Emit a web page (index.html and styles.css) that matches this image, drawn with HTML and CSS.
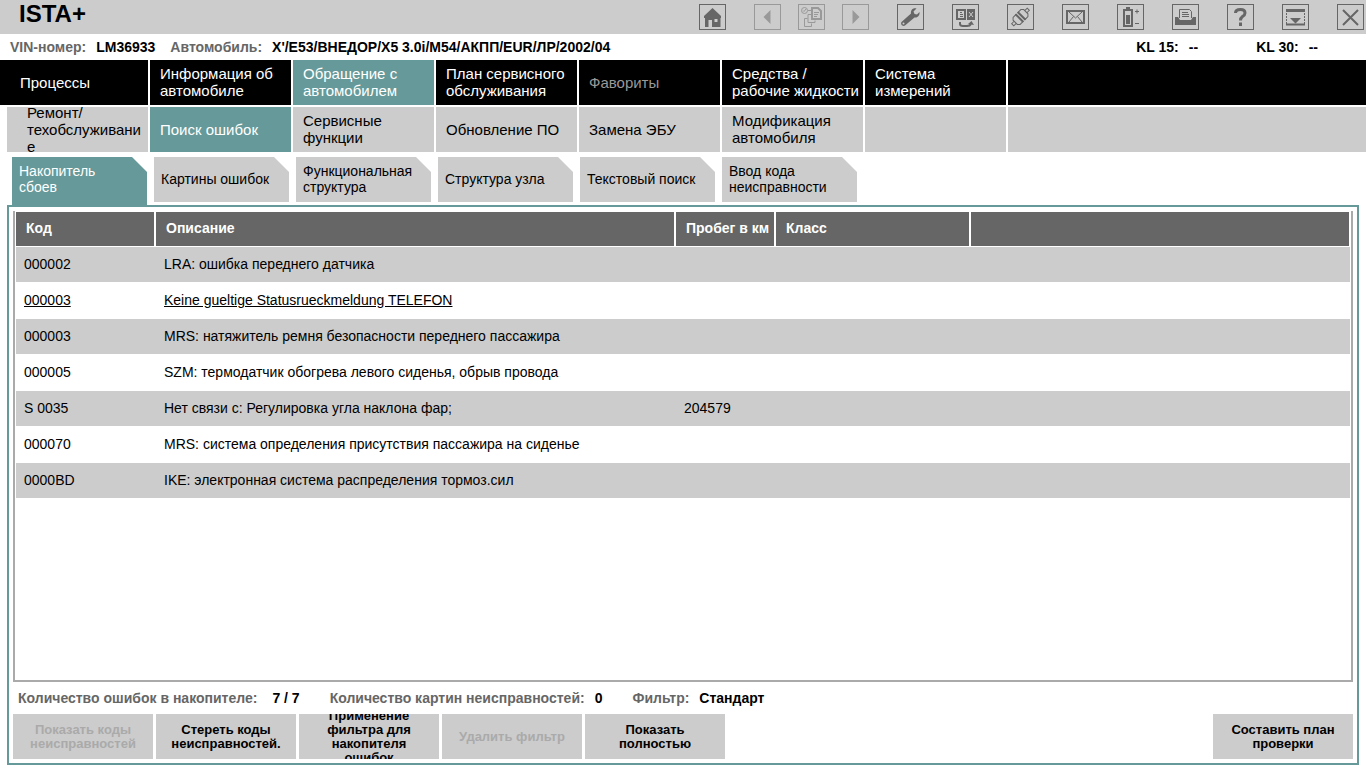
FILE: index.html
```html
<!DOCTYPE html>
<html lang="ru">
<head>
<meta charset="utf-8">
<title>ISTA+</title>
<link rel="stylesheet" href="styles.css">
</head>
<body>
<header class="topbar">
  <h1 class="brand">ISTA+</h1>
  <div class="tools">
    <button class="tool" aria-label="Домой"><svg viewBox="0 0 27 26"><path class="f" d="M13.500 4 22 12v2h-.500v9H18v0h-5v-7H9.500v7H6v-9H5v-2z"/><path class="bg" d="M15.500 15h3v3h-3z"/></svg></button>
    <div class="tool-group">
      <button class="tool" disabled aria-label="Назад"><svg viewBox="0 0 27 26"><path class="f" d="M16.500 6v14L9.500 13z"/></svg></button>
      <button class="tool" disabled aria-label="Список"><svg viewBox="0 0 27 26"><circle class="s" cx="6.500" cy="6.500" r="3"/><path class="s" d="m5 6.500 1 1 2-2.500M10 6.500h3M9.500 14.500h-3v8h7v-3M13 10.500h-3v8h7v-2"/><path class="s w" d="M14 4h6l3 3v8h-9z"/><path class="s" d="M16 8.500h5M16 10.500h4M16 12.500h3"/></svg></button>
      <button class="tool" disabled aria-label="Вперёд"><svg viewBox="0 0 27 26"><path class="f" d="M10.500 6v14l7-7z"/></svg></button>
    </div>
    <button class="tool" aria-label="Настройки"><svg viewBox="0 0 27 26"><path class="f" fill-rule="evenodd" d="M19.500 4.500 16.500 7.500 17.500 10l2.500.500L22.500 8c.500 3-1.500 6-5 5.500L8 21.500c-2 1.500-5-1-3.500-3.500L14 9.500c-.500-3.500 2-6 5.500-5zM5.500 19.500a1 1 0 1 0 2 0 1 1 0 1 0-2 0z"/></svg></button>
    <button class="tool" aria-label="Замена"><svg viewBox="0 0 27 26"><path class="s w" d="M5 6h8v9H5z"/><path class="s" d="M8 8.500h2M8 10.500h3M8 12.500h3"/><path class="f" d="M15 5h8v11h-8z"/><path class="cut" d="m17 8 4 5m0-5-4 5"/><path class="s w" d="M8 18v2q0 2 3 2h4q3 0 4-2"/><path class="f" d="m16 20 3.500-3 2.500 4z"/></svg></button>
    <button class="tool" aria-label="Подключение"><svg viewBox="0 0 27 26"><g transform="rotate(45 13.500 13)"><path class="s" d="M8.500 7.500l2-2h6l2 2v4h-10zM8.500 14.500h10v4l-2 2h-6l-2-2zM12 5.500V2h3v3.500M12 20.500V24h3v-3.500"/><path class="s w" d="M8 11.500h11M8 14.500h11"/></g></svg></button>
    <button class="tool" aria-label="Сообщения"><svg viewBox="0 0 27 26"><path class="s w" d="M5 7h17v12H5z"/><path class="s" d="m7 8 6.500 6L20 8M7 18l4.500-5.500M20 18l-4.500-5.500"/></svg></button>
    <button class="tool" aria-label="Аккумулятор"><svg viewBox="0 0 27 26"><path class="s w" d="M7 6h8v16H7zM10 6V4h2v2"/><path class="f" d="M9 11h4v9H9z"/><path class="s" d="M18 7.500h4M20 5.500v4M18 19.500h4"/></svg></button>
    <button class="tool" aria-label="Печать"><svg viewBox="0 0 27 26"><path class="f" d="M3 13h3l2 3h11l2-3h3v8H3z"/><path class="s" d="M7.500 14V5.500h10l2 2V14"/><path class="s" d="M10 8.500h6M10 10.500h7M10 12.500h7"/></svg></button>
    <button class="tool" aria-label="Справка"><svg viewBox="0 0 27 26"><path class="s ww" d="M8.500 9q0-3.500 5-3.500 4.500 0 4.500 3.500 0 2-2.500 3.500-2 1.500-2 4"/><path class="f" d="M12 18.500h3V22h-3z"/></svg></button>
    <button class="tool" aria-label="Свернуть"><svg viewBox="0 0 27 26"><path class="f" d="M4 5h19v3H4zM8 14h11l-5.500 5.500z"/><path class="s dash" d="M4.500 9v11M22.500 9v11"/><path class="s w" d="M4 20.500h19"/></svg></button>
    <button class="tool" aria-label="Закрыть"><svg viewBox="0 0 27 26"><path class="s w" d="m6 6 15 15M21 6 6 21"/></svg></button>
  </div>
</header>

<section class="vehicle">
  <span class="label">VIN-номер:</span><span>LM36933</span>
  <span class="label next">Автомобиль:</span><span>X'/E53/ВНЕДОР/X5 3.0i/M54/АКПП/EUR/ЛР/2002/04</span>
  <span class="clamps"><span>KL 15:</span><span>--</span></span>
  <span class="clamps second"><span>KL 30:</span><span>--</span></span>
</section>

<nav class="nav main">
  <button>Процессы</button>
  <button>Информация об автомобиле</button>
  <button class="active">Обращение с автомобилем</button>
  <button>План сервисного обслуживания</button>
  <button disabled>Фавориты</button>
  <button>Средства / рабочие жидкости</button>
  <button>Система измерений</button>
  <span class="rest"></span>
</nav>
<nav class="nav sub">
  <button>Ремонт/ техобслуживание</button>
  <button class="active">Поиск ошибок</button>
  <button>Сервисные функции</button>
  <button>Обновление ПО</button>
  <button>Замена ЭБУ</button>
  <button>Модификация автомобиля</button>
  <span class="rest"></span>
  <span class="rest"></span>
</nav>
<nav class="tabs">
  <button class="active">Накопитель сбоев</button>
  <button>Картины ошибок</button>
  <button>Функциональная структура</button>
  <button>Структура узла</button>
  <button>Текстовый поиск</button>
  <button>Ввод кода неисправности</button>
</nav>

<main class="panel">
  <div class="list">
    <table class="faults">
      <colgroup><col class="c-code"><col class="c-text"><col class="c-km"><col class="c-class"><col></colgroup>
      <thead><tr><th>Код</th><th>Описание</th><th>Пробег в км</th><th>Класс</th><th></th></tr></thead>
      <tbody>
        <tr><td>000002</td><td>LRA: ошибка переднего датчика</td><td></td><td></td><td></td></tr>
        <tr class="marked"><td>000003</td><td>Keine gueltige Statusrueckmeldung TELEFON</td><td></td><td></td><td></td></tr>
        <tr><td>000003</td><td>MRS: натяжитель ремня безопасности переднего пассажира</td><td></td><td></td><td></td></tr>
        <tr><td>000005</td><td>SZM: термодатчик обогрева левого сиденья, обрыв провода</td><td></td><td></td><td></td></tr>
        <tr><td>S 0035</td><td>Нет связи с: Регулировка угла наклона фар;</td><td>204579</td><td></td><td></td></tr>
        <tr><td>000070</td><td>MRS: система определения присутствия пассажира на сиденье</td><td></td><td></td><td></td></tr>
        <tr><td>0000BD</td><td>IKE: электронная система распределения тормоз.сил</td><td></td><td></td><td></td></tr>
      </tbody>
    </table>
  </div>
  <div class="summary">
    <span class="label">Количество ошибок в накопителе:</span><span class="value wide">7 / 7</span>
    <span class="label">Количество картин неисправностей:</span><span class="value">0</span>
    <span class="label">Фильтр:</span><span class="value">Стандарт</span>
  </div>
  <div class="actions">
    <button disabled>Показать коды неисправностей</button>
    <button>Стереть коды неисправностей.</button>
    <button>Применение фильтра для накопителя ошибок</button>
    <button disabled>Удалить фильтр</button>
    <button>Показать полностью</button>
    <button class="last">Составить план проверки</button>
  </div>
</main>
</body>
</html>
```
FILE: styles.css
```css
* { box-sizing: border-box; }
body {
  margin: 0;
  min-height: 100vh;
  display: flex;
  flex-direction: column;
  background: #fff;
  color: #000;
  font: 14px/16px "Liberation Sans", Arial, sans-serif;
}
button {
  margin: 0;
  padding: 0;
  border: 0;
  border-radius: 0;
  color: inherit;
  font: inherit;
}

.topbar {
  display: flex;
  justify-content: space-between;
  height: 34px;
  padding: 4px 2px 4px 19px;
  background: #ccc;
}
.brand { margin: 0; font-size: 24px; line-height: 20px; }
.tools { display: flex; gap: 28px; }
.tool-group { display: flex; gap: 17px; }
.tool {
  width: 27px;
  height: 26px;
  border: 1px solid #666;
  background: none;
  color: #666;
}
.tool:disabled { border-color: #999; color: #999; }
.tool svg { display: block; width: 27px; height: 26px; margin: -1px; }
.f { fill: currentColor; }
.bg { fill: #ccc; }
.s { fill: none; stroke: currentColor; stroke-width: 1; }
.w { stroke-width: 2; }
.ww { stroke-width: 3; }
.cut { fill: none; stroke: #ccc; stroke-width: 1; }
.dash { stroke-dasharray: 2 1; }

.vehicle {
  display: flex;
  gap: 10px;
  height: 26px;
  padding: 0 48px 0 10px;
  font-weight: bold;
  line-height: 26px;
}
.label { color: #666; }
.next { margin-left: 5px; }
.clamps { display: flex; gap: 10px; margin-left: auto; }
.second { margin-left: 48px; }

.nav {
  display: grid;
  grid-template-columns: 148px repeat(6, 141px) 1fr;
  grid-auto-rows: 45px;
  gap: 2px;
  margin-bottom: 2px;
  font-size: 15px;
  line-height: 17px;
}
.nav button {
  display: flex;
  align-items: center;
  padding: 0 2px 1px 10px;
  overflow: hidden;
  overflow-wrap: anywhere;
  text-align: left;
}
.nav button:first-child { padding-left: 20px; }
.main button, .main .rest { background: #000; color: #fff; }
.main button:disabled { color: #999; }
.sub button, .sub .rest { background: #ccc; }
.sub button:first-child { margin-left: 7px; }
.nav .active, .tabs .active { background: #699; color: #fff; }

.tabs {
  display: flex;
  align-items: flex-start;
  gap: 7px;
  height: 48px;
  margin-top: 3px;
  padding-left: 12px;
}
.tabs button {
  display: flex;
  align-items: center;
  width: 135px;
  height: 45px;
  padding: 0 15px 2px 7px;
  background: #ccc;
  text-align: left;
  clip-path: polygon(0 0, 120px 0, 100% 15px, 100% 100%, 0 100%);
}
.tabs .active { height: 48px; padding-bottom: 5px; }

.panel {
  flex: 1;
  display: flex;
  flex-direction: column;
  margin: 0 7px 3px;
  padding: 4px 4px 4px;
  border: 2px solid #699;
}
.list {
  flex: 1;
  padding: 1px 1px 0;
  border: 2px solid #aaa;
  border-top: 0;
}
.faults {
  width: 100%;
  table-layout: fixed;
  border-spacing: 0;
}
.c-code { width: 140px; }
.c-text { width: 520px; }
.c-km { width: 100px; }
.c-class { width: 195px; }
.faults th {
  height: 35px;
  padding: 0 0 2px 10px;
  border-right: 2px solid #fff;
  border-bottom: 1px solid #fff;
  background: #666;
  color: #fff;
  text-align: left;
  white-space: nowrap;
}
.faults th:last-child { border-right-width: 1px; }
.faults td {
  height: 36px;
  padding: 0 8px 2px;
  border-bottom: 1px solid #fff;
}
.faults tbody tr:nth-child(odd) { background: #ccc; }
.marked { text-decoration: underline; }

.summary {
  display: flex;
  padding: 0 5px;
  font-weight: bold;
  line-height: 32px;
}
.value { margin: 0 30px 0 10px; }
.wide { margin-left: 15px; }

.actions { display: flex; gap: 3px; }
.actions button {
  display: flex;
  align-items: center;
  justify-content: center;
  width: 140px;
  height: 45px;
  padding: 0 14px;
  overflow: hidden;
  background: #ccc;
  font-size: 13px;
  font-weight: bold;
  line-height: 14px;
}
.actions button:disabled { color: #aaa; }
.actions .last { margin-left: auto; }
```
